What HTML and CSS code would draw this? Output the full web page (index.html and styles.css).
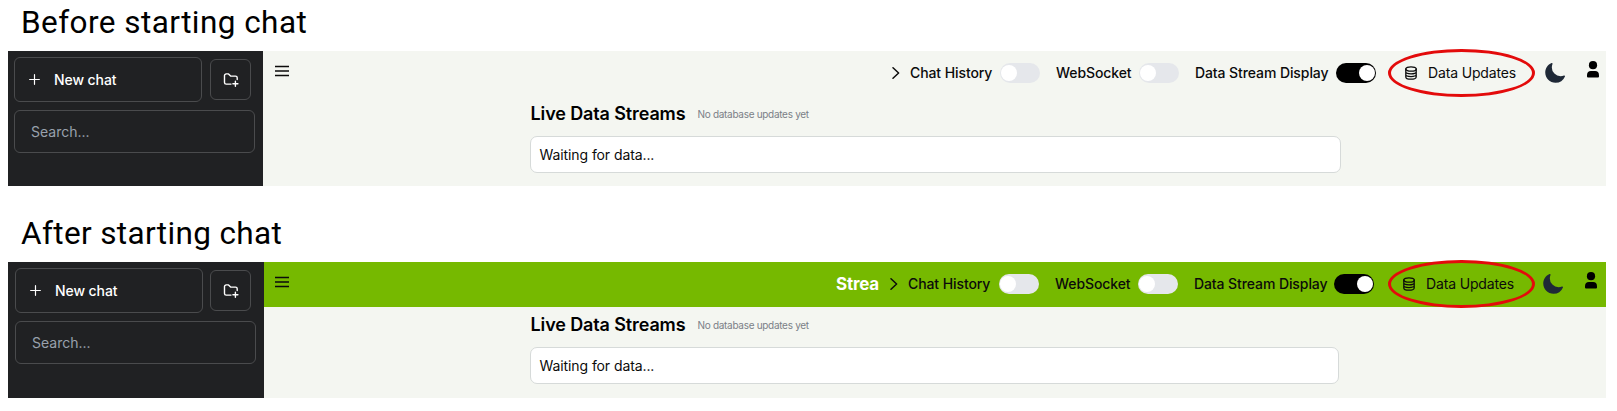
FILE: index.html
```
<!DOCTYPE html>
<html lang="en">
<head>
<meta charset="utf-8">
<title>Live Data Streams</title>
<link rel="stylesheet" href="styles.css">
</head>
<body>
<svg class="defs" width="0" height="0">
  <symbol id="plus" viewBox="0 0 12 12"><path d="M6 .7v10.6M.7 6h10.6"/></symbol>
  <symbol id="folder" viewBox="0 0 16 16"><path d="M8 12.1H3.2A1.7 1.7 0 0 1 1.5 10.4V3.6A1.7 1.7 0 0 1 3.2 1.9H5.5L7.6 4.1H12.5A1.7 1.7 0 0 1 14.2 5.8V7.5M12.4 9.2v5M9.9 11.7h5"/></symbol>
  <symbol id="menu" viewBox="0 0 14 12"><path d="M0 1.5h14M0 6h14M0 10.5h14"/></symbol>
  <symbol id="chevron" viewBox="0 0 8 12"><path d="M1 .8 6.6 6 1 11.2"/></symbol>
  <symbol id="database" viewBox="0 0 12 14"><ellipse cx="6" cy="3" rx="5.2" ry="2.2"/><path d="M.8 3v8c0 1.2 2.3 2.2 5.2 2.2s5.2-1 5.2-2.2V3M.8 5.8C.8 7 3.1 7.9 6 7.9s5.2-.9 5.2-2.1M.8 8.5c0 1.2 2.3 2.1 5.2 2.1s5.2-.9 5.2-2.1"/></symbol>
  <symbol id="moon" viewBox="2 1.5 20.5 20.5"><path d="M9.528 1.718a.75.75 0 0 1 .162.819A8.97 8.97 0 0 0 9 6a9 9 0 0 0 9 9 8.97 8.97 0 0 0 3.463-.69.75.75 0 0 1 .981.98 10.503 10.503 0 0 1-9.694 6.46c-5.799 0-10.5-4.701-10.5-10.5 0-4.368 2.667-8.112 6.46-9.694a.75.75 0 0 1 .818.162Z"/></symbol>
  <symbol id="person" viewBox="0 0 12 17"><circle cx="6" cy="4.2" r="4.1"/><path d="M0 14.2C0 11.4 1.6 10.1 3.8 10.1H8.2C10.4 10.1 12 11.4 12 14.2V15.6Q12 16.6 11 16.6H1Q0 16.6 0 15.6Z"/></symbol>
</svg>

<h1 class="title title-before">Before starting chat</h1>
<section class="app before">
  <aside class="sidebar">
    <div class="actions">
      <div class="new-chat"><svg class="plus line"><use href="#plus"/></svg><span>New chat</span></div>
      <div class="new-folder"><svg class="folder line"><use href="#folder"/></svg></div>
    </div>
    <div class="search">Search...</div>
  </aside>
  <main class="main">
    <header class="bar">
      <svg class="menu line"><use href="#menu"/></svg>
      <div class="controls">
        <svg class="chevron line"><use href="#chevron"/></svg>
        <span class="label history">Chat History</span><i class="toggle"></i>
        <span class="label socket">WebSocket</span><i class="toggle"></i>
        <span class="label display">Data Stream Display</span><i class="toggle on"></i>
        <div class="updates"><svg class="database line"><use href="#database"/></svg><span>Data Updates</span><i class="ring"></i></div>
        <svg class="moon"><use href="#moon"/></svg>
        <svg class="person"><use href="#person"/></svg>
      </div>
    </header>
    <div class="content">
      <div class="heading"><h2>Live Data Streams</h2><small>No database updates yet</small></div>
      <div class="stream">Waiting for data...</div>
    </div>
  </main>
</section>

<h1 class="title title-after">After starting chat</h1>
<section class="app after">
  <aside class="sidebar">
    <div class="actions">
      <div class="new-chat"><svg class="plus line"><use href="#plus"/></svg><span>New chat</span></div>
      <div class="new-folder"><svg class="folder line"><use href="#folder"/></svg></div>
    </div>
    <div class="search">Search...</div>
  </aside>
  <main class="main">
    <header class="bar">
      <svg class="menu line"><use href="#menu"/></svg>
      <div class="controls">
        <strong class="marquee">Strea</strong>
        <svg class="chevron line"><use href="#chevron"/></svg>
        <span class="label history">Chat History</span><i class="toggle"></i>
        <span class="label socket">WebSocket</span><i class="toggle"></i>
        <span class="label display">Data Stream Display</span><i class="toggle on"></i>
        <div class="updates"><svg class="database line"><use href="#database"/></svg><span>Data Updates</span><i class="ring"></i></div>
        <svg class="moon"><use href="#moon"/></svg>
        <svg class="person"><use href="#person"/></svg>
      </div>
    </header>
    <div class="content">
      <div class="heading"><h2>Live Data Streams</h2><small>No database updates yet</small></div>
      <div class="stream">Waiting for data...</div>
    </div>
  </main>
</section>
</body>
</html>
```
FILE: styles.css
```
* { box-sizing: border-box; }
body { margin: 0; height: 411px; overflow: hidden; background: #fff; color: #0b0b0b; font: 14px/20px Inter, sans-serif; letter-spacing: -.09px; white-space: nowrap; }
svg { display: block; flex: none; overflow: visible; }
.defs { height: 0; }
.line { fill: none; stroke: currentColor; stroke-width: 1.5; stroke-linecap: round; stroke-linejoin: round; }
.title { margin: 0; padding-left: 21px; font: 400 31.5px/40px Roboto, sans-serif; color: #000; }
.title-before { height: 51px; padding-top: 3px; letter-spacing: .44px; }
.title-after { height: 76px; padding-top: 28px; letter-spacing: .36px; }
.app { display: flex; width: 1598px; margin-left: 8px; background: #f4f6f1; }
.before { height: 135px; }
.after { height: 136px; }
.sidebar { width: 255px; flex: none; padding: 6px 0 0 6px; background: #202123; color: #fff; }
.after .sidebar { width: 256px; padding-left: 7px; }
.actions { display: flex; align-items: center; gap: 8px; }
.new-chat, .new-folder, .search { display: flex; align-items: center; border: 1px solid #4a4b4d; border-radius: 6px; }
.new-chat { width: 188px; height: 45px; padding-left: 14px; gap: 14px; font-weight: 500; }
.plus { width: 11px; height: 11px; stroke-width: 1.3; }
.new-folder { width: 41px; height: 41px; justify-content: center; }
.after .new-folder { margin-left: -1px; }
.folder { width: 16px; height: 16px; stroke-width: 1.4; }
.search { width: 241px; height: 43px; margin-top: 8px; padding-left: 16px; color: #99a1ad; letter-spacing: 0; }
.main { flex: 1; }
.bar { display: flex; justify-content: space-between; height: 45px; padding: 0 7px 0 12px; }
.after .bar { background: #76b900; padding: 0 9px 0 11px; }
.menu { width: 14px; height: 12px; margin-top: 14px; stroke-width: 1.5; stroke-linecap: butt; }
.controls { display: flex; align-items: center; height: 44px; }
.marquee { width: 45px; margin-right: 9px; color: #fff; font-size: 17px; font-weight: 700; letter-spacing: -.2px; }
.chevron { width: 8px; height: 12px; margin-right: 10px; }
.label { font-weight: 500; }
.history { width: 90px; }
.socket { width: 83px; }
.display { width: 141px; }
.toggle { display: flex; align-items: center; flex: none; width: 40px; height: 20px; margin-right: 16px; padding: 0 1px; border-radius: 10px; background: #e5e7eb; }
.toggle::before { content: ""; width: 16px; height: 16px; border-radius: 50%; background: #fff; }
.toggle.on { justify-content: flex-end; margin-right: 29px; background: #000; }
.updates { position: relative; display: flex; align-items: center; width: 111px; gap: 11px; letter-spacing: -.15px; }
.database { width: 12px; height: 14px; stroke-width: 1.3; }
.ring { position: absolute; left: -17px; top: -14px; width: 147px; height: 48px; border: 3px solid #e30b0b; border-radius: 50%; }
.after .ring { left: -15px; }
.after .updates { margin-left: 0; }
.moon { width: 20px; height: 20px; margin-left: 29px; fill: #1f2937; }
.person { width: 12px; height: 17px; margin: -8px 0 0 22px; fill: #000; }
.after .history { margin-right: 1px; }
.after .display { width: 140px; }
.content { padding-left: 267px; }
.after .content { padding-left: 266px; }
.heading { display: flex; align-items: center; height: 36px; gap: 12px; padding-left: .5px; }
.heading h2 { width: 155px; margin: 0; color: #000; font-size: 18px; line-height: 28px; font-weight: 600; letter-spacing: -.12px; }
.heading small { color: #7b8087; font-size: 10px; letter-spacing: -.3px; }
.stream { display: flex; align-items: center; width: 811px; height: 37px; margin-top: 4px; padding-left: 8.5px; border: 1px solid #d6dad9; border-radius: 7px; background: #fff; }
.after .stream { width: 809px; }
```
